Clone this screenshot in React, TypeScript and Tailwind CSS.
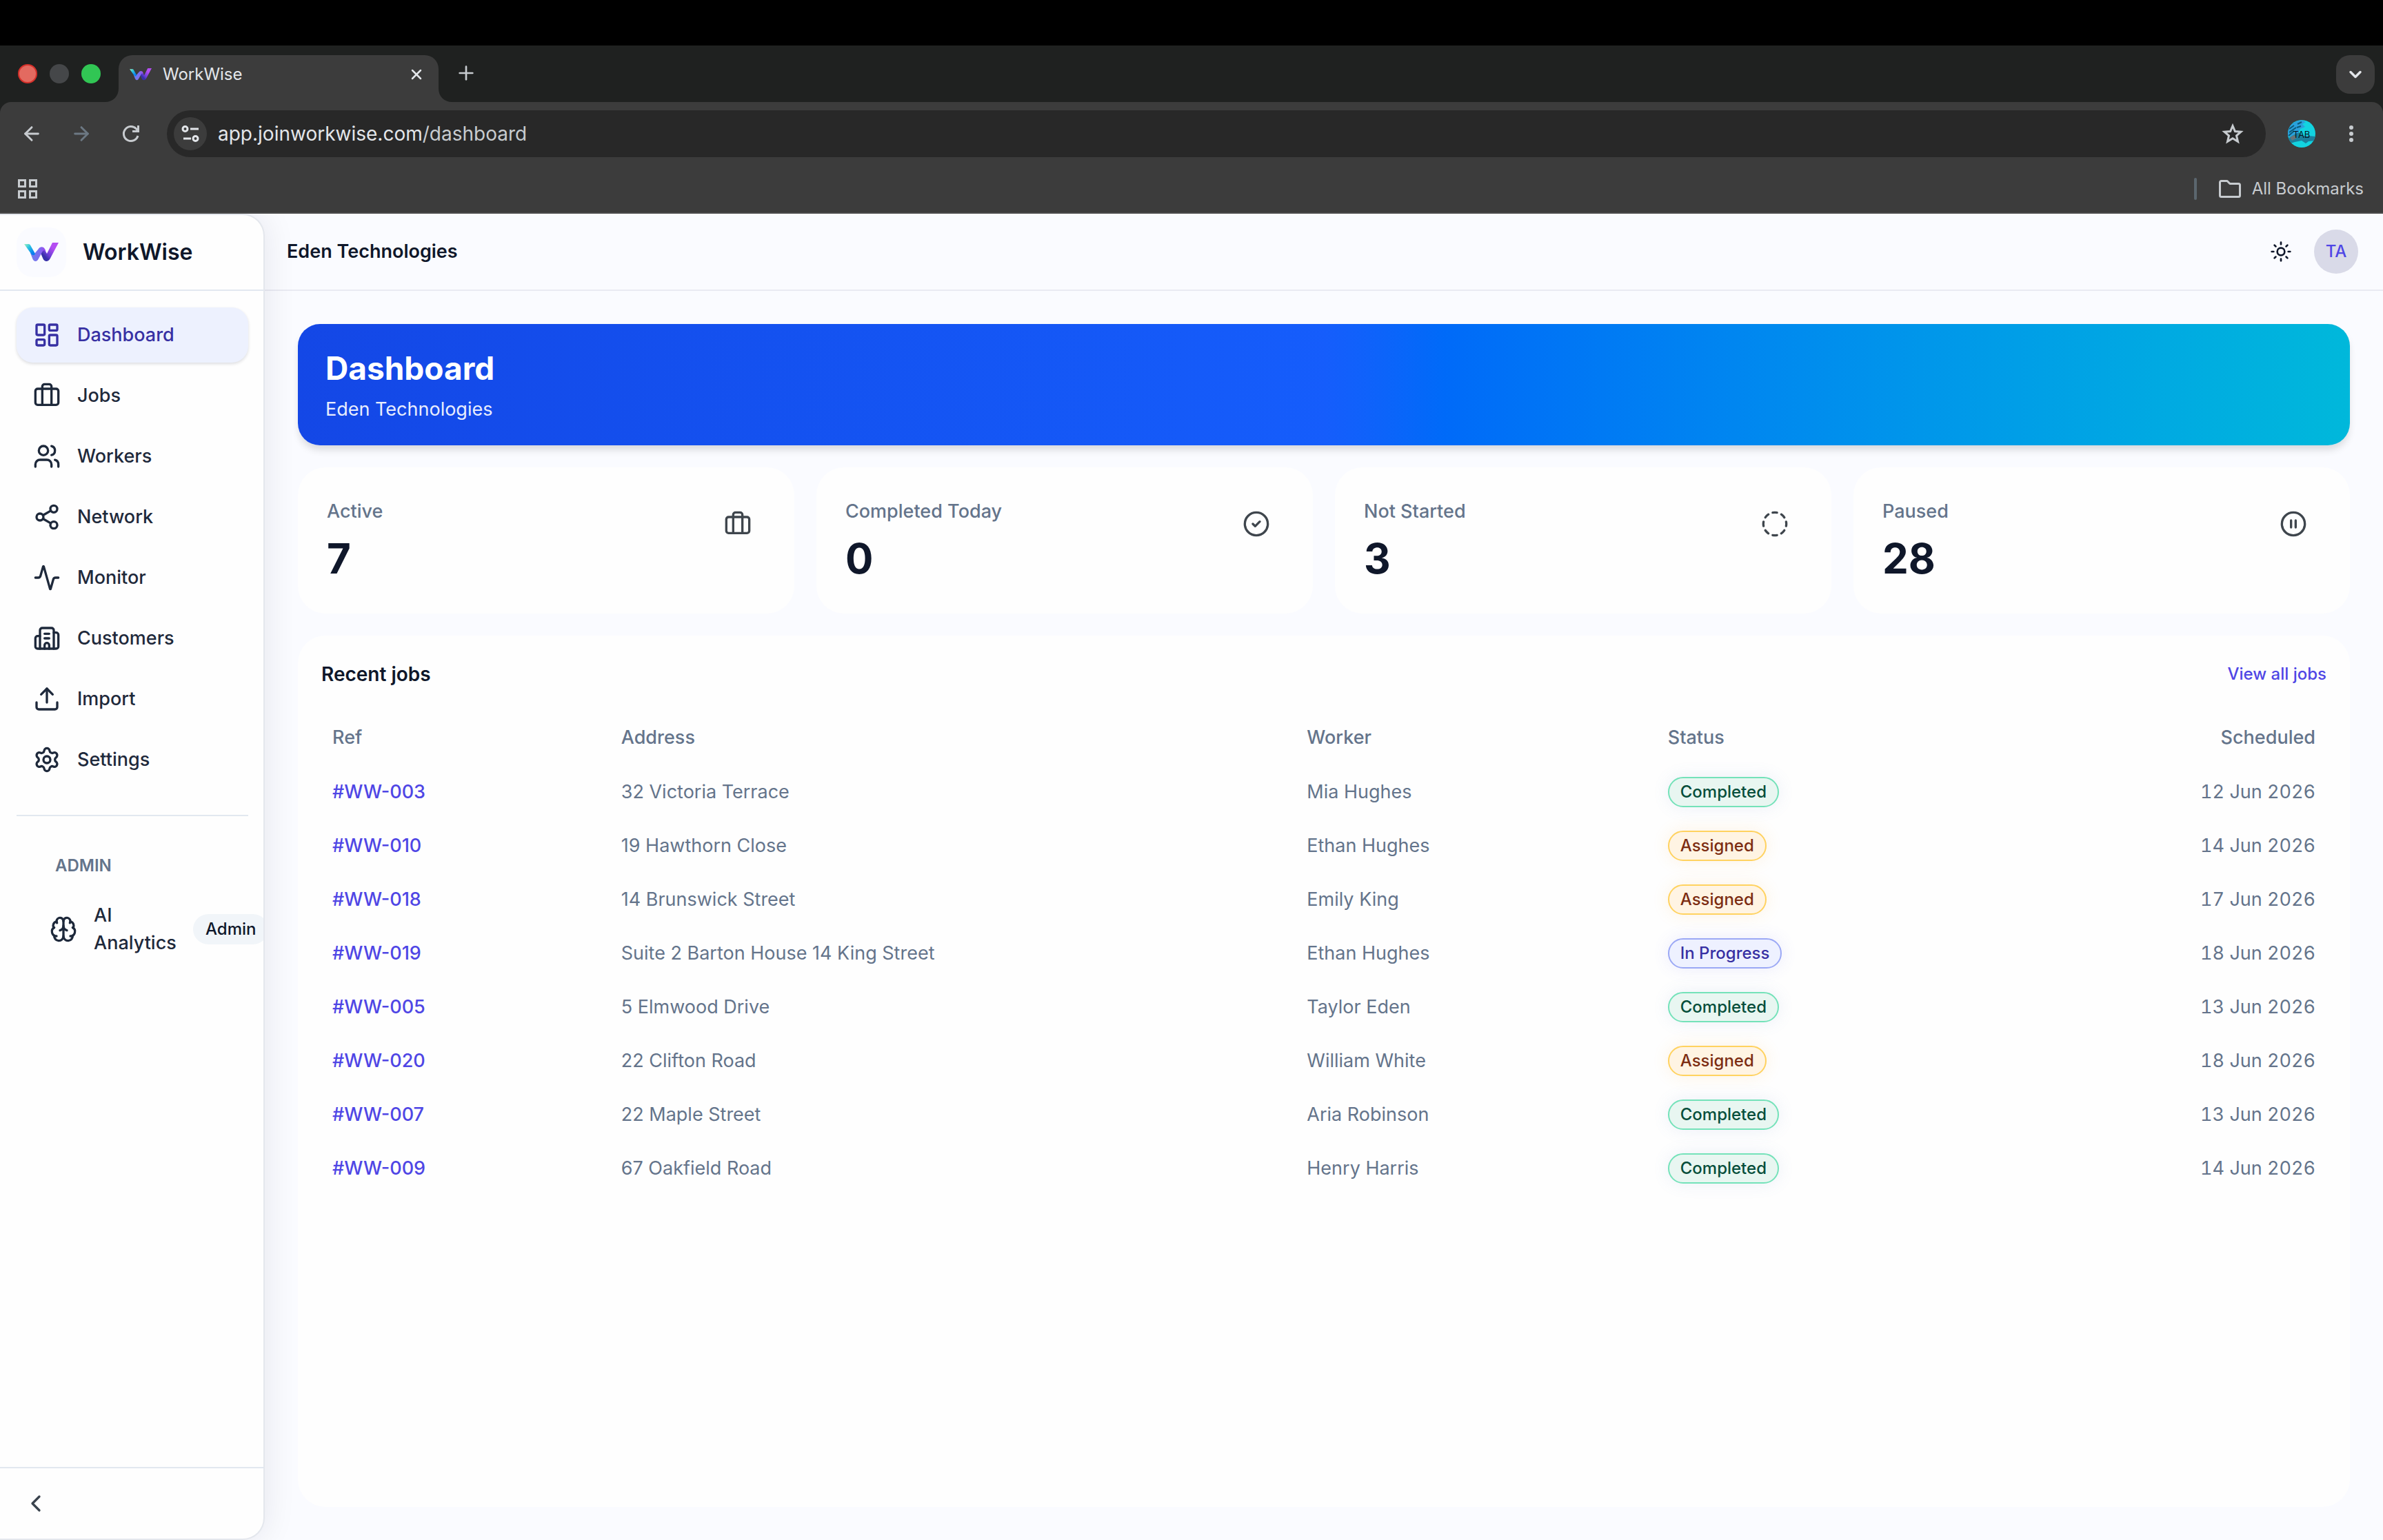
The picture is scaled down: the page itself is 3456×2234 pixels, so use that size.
import type { ReactNode } from 'react'
import {
  Activity,
  ArrowLeft,
  ArrowRight,
  Brain,
  Briefcase,
  Building2,
  ChevronDown,
  ChevronLeft,
  CircleCheck,
  CircleDashed,
  CirclePause,
  LayoutDashboard,
  Plus,
  Settings,
  Share2,
  Sun,
  Upload,
  Users,
  X,
  type LucideIcon,
} from 'lucide-react'
import clsx from 'clsx'

type Status = 'Completed' | 'Assigned' | 'In Progress'

interface Job {
  ref: string
  address: string
  worker: string
  status: Status
  scheduled: string
}

const jobs: Job[] = [
  { ref: '#WW-003', address: '32 Victoria Terrace', worker: 'Mia Hughes', status: 'Completed', scheduled: '12 Jun 2026' },
  { ref: '#WW-010', address: '19 Hawthorn Close', worker: 'Ethan Hughes', status: 'Assigned', scheduled: '14 Jun 2026' },
  { ref: '#WW-018', address: '14 Brunswick Street', worker: 'Emily King', status: 'Assigned', scheduled: '17 Jun 2026' },
  { ref: '#WW-019', address: 'Suite 2 Barton House 14 King Street', worker: 'Ethan Hughes', status: 'In Progress', scheduled: '18 Jun 2026' },
  { ref: '#WW-005', address: '5 Elmwood Drive', worker: 'Taylor Eden', status: 'Completed', scheduled: '13 Jun 2026' },
  { ref: '#WW-020', address: '22 Clifton Road', worker: 'William White', status: 'Assigned', scheduled: '18 Jun 2026' },
  { ref: '#WW-007', address: '22 Maple Street', worker: 'Aria Robinson', status: 'Completed', scheduled: '13 Jun 2026' },
  { ref: '#WW-009', address: '67 Oakfield Road', worker: 'Henry Harris', status: 'Completed', scheduled: '14 Jun 2026' },
]

const navItems: { label: string; icon: LucideIcon }[] = [
  { label: 'Dashboard', icon: LayoutDashboard },
  { label: 'Jobs', icon: Briefcase },
  { label: 'Workers', icon: Users },
  { label: 'Network', icon: Share2 },
  { label: 'Monitor', icon: Activity },
  { label: 'Customers', icon: Building2 },
  { label: 'Import', icon: Upload },
  { label: 'Settings', icon: Settings },
]

const stats: { label: string; value: number; icon: LucideIcon }[] = [
  { label: 'Active', value: 7, icon: Briefcase },
  { label: 'Completed Today', value: 0, icon: CircleCheck },
  { label: 'Not Started', value: 3, icon: CircleDashed },
  { label: 'Paused', value: 28, icon: CirclePause },
]

const statusStyles: Record<Status, string> = {
  Completed: 'border-[#74e2b9] bg-[#e8f6f1] text-[#064e3b] shadow-[0_0_24px_rgba(100,130,200,0.12)]',
  Assigned: 'border-[#ffd25f] bg-[#fff4e3] text-[#7c2d12] shadow-[0_0_24px_rgba(251,170,60,0.14)]',
  'In Progress': 'border-[#9ba8f5] bg-[#eef1ff] text-[#3730a3] shadow-[0_0_24px_rgba(99,102,241,0.12)]',
}

export default function App() {
  return (
    <div className="flex min-h-screen flex-col bg-[#fafbff] font-['Inter','Liberation_Sans',sans-serif] text-[#0f172a]">
      <BrowserChrome />
      <div className="flex flex-1">
        <Sidebar />
        <div className="flex min-w-0 flex-1 flex-col">
          <TopBar />
          <main className="flex flex-1 flex-col gap-8 p-12">
            <section className="rounded-[32px] bg-linear-to-r from-blue-700 via-blue-600 to-cyan-500 px-10 pt-9 pb-8 text-white shadow-[0_8px_12px_-2px_rgba(0,0,0,0.14)]">
              <h1 className="text-[46px] leading-[56px] font-bold">Dashboard</h1>
              <p className="mt-3 text-[27px] leading-10 text-white/90">Eden Technologies</p>
            </section>
            <div className="grid grid-cols-4 gap-8">
              {stats.map((stat) => (
                <StatCard key={stat.label} {...stat} />
              ))}
            </div>
            <RecentJobs />
          </main>
        </div>
      </div>
    </div>
  )
}

function BrowserChrome() {
  return (
    <header className="relative z-20 bg-[#1f2120] pt-[66px] shadow-[inset_0_66px_0_#000]">
      {/* Tab strip */}
      <div className="flex h-[82px] items-end justify-between pr-3">
        <div className="flex items-end">
          <div className="flex h-[82px] w-[172px] items-center gap-[18px] pl-[26px]">
            <span className="size-7 rounded-full border-2 border-[#d5302a] bg-[#e36a60]"></span>
            <span className="size-7 rounded-full bg-[#454749]"></span>
            <span className="size-7 rounded-full bg-[#31c654]"></span>
          </div>
          <div className="relative flex h-[68px] w-[464px] items-center rounded-t-[20px] bg-[#3c3c3c] pr-5 pb-3 pl-4">
            <TabCorner className="absolute bottom-0 -left-5 size-5" />
            <TabCorner className="absolute -right-5 bottom-0 size-5 -scale-x-100" />
            <Logo className="w-8" />
            <span className="ml-4 flex-1 text-2xl text-[#e3e6ea]">WorkWise</span>
            <button aria-label="Close tab" className="text-[#e3e6ea]">
              <X className="size-6" strokeWidth={2.5} />
            </button>
          </div>
          <button aria-label="New tab" className="mb-[26px] ml-6 text-[#c7cbcf]">
            <Plus className="size-8" strokeWidth={2} />
          </button>
        </div>
        <button aria-label="Search tabs" className="mb-3 flex size-14 items-center justify-center rounded-[20px] bg-[#3c3c3c] text-[#e3e6ea]">
          <ChevronDown className="size-7" strokeWidth={3} />
        </button>
      </div>

      <div className="rounded-t-2xl border-b-2 border-[#4a4a4a] bg-[#3c3c3c]">
        {/* Address bar */}
        <div className="flex items-center px-[30px] pt-3 text-[#c7cbcf]">
          <button aria-label="Back">
            <ArrowLeft className="size-8" strokeWidth={2.2} />
          </button>
          <button aria-label="Forward" className="ml-10 text-[#6c7883]">
            <ArrowRight className="size-8" strokeWidth={2.2} />
          </button>
          <button aria-label="Reload" className="ml-10">
            <ReloadIcon />
          </button>
          <div className="ml-9 flex h-[68px] flex-1 items-center rounded-full bg-[#282828] pr-8 pl-[10px]">
            <button aria-label="Site information" className="flex size-12 items-center justify-center rounded-full bg-[#3c3c3c]">
              <TuneIcon />
            </button>
            <p className="ml-4 flex-1 text-[28px] leading-10 text-[#e3e6ea]">
              app.joinworkwise.com<span className="text-[#c7cbcf]">/dashboard</span>
            </p>
            <button aria-label="Bookmark this page">
              <StarIcon />
            </button>
          </div>
          <button aria-label="Profile" className="ml-8">
            <ProfileAvatar />
          </button>
          <button aria-label="Browser menu" className="ml-9 flex w-8 flex-col items-center gap-[3px]">
            <span className="size-[6px] rounded-full bg-[#c7cbcf]"></span>
            <span className="size-[6px] rounded-full bg-[#c7cbcf]"></span>
            <span className="size-[6px] rounded-full bg-[#c7cbcf]"></span>
          </button>
        </div>
        {/* Bookmarks */}
        <div className="flex h-20 items-center pt-3 pr-7 pl-[26px] text-[#c7cbcf]">
          <button aria-label="Apps" className="grid grid-cols-2 gap-1">
            <span className="size-3 border-[3px] border-[#c7cbcf]"></span>
            <span className="size-3 border-[3px] border-[#c7cbcf]"></span>
            <span className="size-3 border-[3px] border-[#c7cbcf]"></span>
            <span className="size-3 border-[3px] border-[#c7cbcf]"></span>
          </button>
          <span className="mr-8 ml-auto h-8 w-1 rounded-full bg-[#5b666e]"></span>
          <button className="flex items-center gap-4 text-2xl">
            <FolderIcon />
            All Bookmarks
          </button>
        </div>
      </div>
    </header>
  )
}

function Sidebar() {
  return (
    <aside className="relative z-10 flex w-96 shrink-0 flex-col overflow-hidden rounded-r-[32px] border-y-2 border-r-2 border-[#e4e7ed] bg-[#fefefe] shadow-[0_0_48px_rgba(15,23,42,0.09)]">
      <div className="flex h-[110px] items-center gap-6 border-b-2 border-[#e2e8f0] px-6">
        <span className="flex size-[72px] items-center justify-center rounded-3xl bg-[#fafbff]">
          <Logo className="w-[50px]" />
        </span>
        <span className="text-[32px] font-semibold">WorkWise</span>
      </div>

      <nav className="flex flex-1 flex-col gap-2 pt-6 pr-[22px] pl-6">
        {navItems.map(({ label, icon: Icon }, index) => (
          <a
            key={label}
            href="#"
            className={clsx(
              'flex h-20 items-center gap-6 rounded-3xl px-6 text-[27px] font-medium',
              index === 0 ? 'bg-[#edf1fe] text-[#3730a3] shadow-[0_2px_4px_rgba(15,23,42,0.14)]' : 'text-[#1e293b]',
            )}
          >
            <Icon className="size-10" strokeWidth={2} />
            {label}
          </a>
        ))}

        <div className="mt-8 border-t-2 border-[#e2e8f0] pt-12">
          <p className="px-14 text-2xl leading-12 font-semibold text-[#64748b]">ADMIN</p>
          <a href="#" className="mt-7 flex items-center pl-12 text-[27px] leading-10 font-medium text-[#1e293b]">
            <Brain className="size-10 shrink-0" strokeWidth={2} />
            <span className="ml-6 w-36 shrink-0">AI Analytics</span>
            <span className="shrink-0 rounded-full bg-[#f1f5f9] px-[18px] text-2xl leading-11 text-[#0f172a]">Admin</span>
          </a>
        </div>
      </nav>

      <div className="flex h-[104px] items-center border-t-2 border-[#e2e8f0] px-8">
        <button aria-label="Collapse sidebar" className="text-[#3a434d]">
          <ChevronLeft className="size-10" strokeWidth={2} />
        </button>
      </div>
    </aside>
  )
}

function TopBar() {
  return (
    <div className="flex h-28 items-center border-b-2 border-[#e9eaf2] pr-9 pl-8">
      <p className="flex-1 text-[27px] font-semibold">Eden Technologies</p>
      <button aria-label="Toggle theme">
        <Sun className="size-8" strokeWidth={2} />
      </button>
      <button aria-label="Account" className="ml-8 size-16 rounded-full bg-[#d9dae8] text-2xl font-medium text-[#4f46e5]">
        TA
      </button>
    </div>
  )
}

function Card({ className, children }: { className?: string; children: ReactNode }) {
  return <section className={clsx('rounded-[40px] bg-[#fefefe]', className)}>{children}</section>
}

function StatCard({ label, value, icon: Icon }: { label: string; value: number; icon: LucideIcon }) {
  return (
    <Card className="flex h-[212px] justify-between p-[42px]">
      <div>
        <p className="text-[27px] leading-11 font-medium text-[#64748b]">{label}</p>
        <p className="mt-4 text-[60px] leading-[60px] font-bold">{value}</p>
      </div>
      <span className="flex size-20 items-center justify-center text-[#3f464d]">
        <Icon className="size-10" strokeWidth={2} />
      </span>
    </Card>
  )
}

function RecentJobs() {
  return (
    <Card className="flex-1 px-[34px] pt-9">
      <div className="flex h-[72px] items-start justify-between leading-10">
        <h2 className="text-[28px] leading-10 font-semibold">Recent jobs</h2>
        <a href="#" className="text-2xl leading-10 font-medium text-[#4f46e5]">
          View all jobs
        </a>
      </div>
      <table className="w-full table-fixed text-left text-[27px] text-[#64748b]">
        <colgroup>
          <col className="w-[14.4%]" />
          <col className="w-[34.2%]" />
          <col className="w-[18%]" />
          <col />
          <col className="w-[16%]" />
        </colgroup>
        <thead>
          <tr className="h-20">
            <th className="px-4 font-medium">Ref</th>
            <th className="px-4 font-medium">Address</th>
            <th className="px-4 font-medium">Worker</th>
            <th className="px-4 font-medium">Status</th>
            <th className="px-4 text-right font-medium">Scheduled</th>
          </tr>
        </thead>
        <tbody>
          {jobs.map((job) => (
            <tr key={job.ref} className="h-[78px]">
              <td className="px-4">
                <a href="#" className="font-medium text-[#4f46e5]">
                  {job.ref}
                </a>
              </td>
              <td className="px-4">{job.address}</td>
              <td className="px-4">{job.worker}</td>
              <td className="px-4">
                <span className={clsx('flex h-11 w-fit items-center rounded-full border-2 px-4 text-2xl font-medium', statusStyles[job.status])}>
                  {job.status}
                </span>
              </td>
              <td className="px-4 text-right tabular-nums">{job.scheduled}</td>
            </tr>
          ))}
        </tbody>
      </table>
    </Card>
  )
}

/* Icons */

function Logo({ className }: { className?: string }) {
  return (
    <svg viewBox="0 0 50 28" className={className} aria-hidden="true">
      <defs>
        <linearGradient id="logo-left" x1="0" y1="0" x2="1" y2="1">
          <stop offset="0" stopColor="#a7f3c0" />
          <stop offset="0.35" stopColor="#2cc5e0" />
          <stop offset="0.8" stopColor="#0a7ff0" />
        </linearGradient>
        <linearGradient id="logo-mid" x1="0" y1="0" x2="1" y2="0">
          <stop offset="0" stopColor="#6f80ea" />
          <stop offset="0.6" stopColor="#7c6cf0" />
          <stop offset="1" stopColor="#a044ee" />
        </linearGradient>
        <linearGradient id="logo-right" x1="1" y1="0" x2="0" y2="1">
          <stop offset="0.3" stopColor="#b44df2" />
          <stop offset="0.6" stopColor="#6a3fd6" />
          <stop offset="0.75" stopColor="#3730a8" />
        </linearGradient>
      </defs>
      <path d="M41 0h9L37.500 23.500c-2.500 4.600-8 4.600-10 0L23 13l5-6 5 9z" fill="url(#logo-right)" />
      <path d="M9 15l6 1 5.500-6.500c2.500-4.500 8-4.500 10 .5l1 2.500c-2-2-4-1.500-5 .5L20.500 24c-2 4-6 4-8 0z" fill="url(#logo-mid)" />
      <path d="M0 2h6c1.500 0 2.500.5 3.200 2L16 16c-1 3-4 3-6 0z" fill="url(#logo-left)" />
    </svg>
  )
}

function TabCorner({ className }: { className: string }) {
  return (
    <svg viewBox="0 0 20 20" className={className} aria-hidden="true">
      <path d="M20 0v20H0C12 20 20 12 20 0z" fill="#3c3c3c" />
    </svg>
  )
}

function ReloadIcon() {
  return (
    <svg viewBox="0 0 32 32" className="size-8" fill="none" stroke="currentColor" strokeWidth="3" aria-hidden="true">
      <path d="M26 19a10.500 10.500 0 1 1-2.500-10.200L26 11.500" />
      <path d="M26.500 4v8.500H18" />
    </svg>
  )
}

function TuneIcon() {
  return (
    <svg viewBox="0 0 26 26" className="size-[26px]" fill="none" stroke="#e3e6ea" strokeWidth="3" aria-hidden="true">
      <circle cx="5.500" cy="6" r="3.500" />
      <path d="M13 6h12M3 20h11" />
      <circle cx="20.500" cy="20" r="3.500" />
    </svg>
  )
}

function StarIcon() {
  return (
    <svg viewBox="0 0 32 32" className="size-8" fill="none" stroke="#c7cbcf" strokeWidth="3" aria-hidden="true">
      <path d="M16 4.500l3.400 8 8.600.7-6.500 5.700 2 8.500-7.500-4.600-7.500 4.600 2-8.500L4 13.200l8.600-.7z" />
    </svg>
  )
}

function FolderIcon() {
  return (
    <svg viewBox="0 0 32 26" className="w-8" fill="none" stroke="#c7cbcf" strokeWidth="3" strokeLinejoin="round" aria-hidden="true">
      <path d="M1.500 3.500a2 2 0 0 1 2-2H12l4 4h12.500a2 2 0 0 1 2 2v15a2 2 0 0 1-2 2h-25a2 2 0 0 1-2-2z" />
    </svg>
  )
}

function ProfileAvatar() {
  return (
    <svg viewBox="0 0 40 40" className="size-10" aria-hidden="true">
      <clipPath id="avatar">
        <circle cx="20" cy="20" r="20" />
      </clipPath>
      <g clipPath="url(#avatar)">
        <rect width="40" height="40" fill="#12d3e0" />
        <path d="M0 10l12-8 8-2 6 3-5 3 4 4-7 3-4 8-14 4z" fill="#2aa0dc" />
        <path d="M2 13l7-5M2 18l10-7M1 23l8-7M14 6l6-3M13 11l6-2" stroke="#0c5a78" strokeWidth="2" />
        <path d="M0 27l8-5 8-4 6 5 8 0 10 1v6l-10 1-4 3-6-4-10 2-6 2z" fill="#1b7f9c" />
        <path d="M3 25l6-3 4 4-7 4z" fill="#66747a" />
      </g>
      <text x="20" y="26" textAnchor="middle" fontSize="13" fill="#04161e">
        TAB
      </text>
    </svg>
  )
}
